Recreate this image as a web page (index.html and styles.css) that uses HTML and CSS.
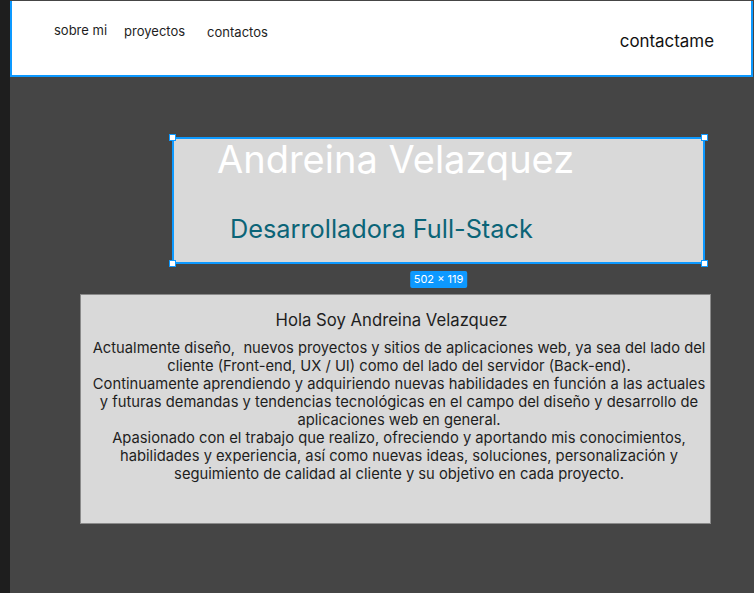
FILE: index.html
```html
<!DOCTYPE html>
<html lang="es">
<head>
<meta charset="utf-8">
<title>Andreina Velazquez</title>
<link rel="stylesheet" href="styles.css">
</head>
<body>
<div class="rail"></div>
<main class="canvas">
  <header class="topbar">
    <nav class="nav">
      <a class="nav-link nav-1">sobre mi</a>
      <a class="nav-link nav-2">proyectos</a>
      <a class="nav-link nav-3">contactos</a>
    </nav>
    <a class="cta">contactame</a>
  </header>

  <section class="hero">
    <h1 class="hero-name">Andreina Velazquez</h1>
    <h2 class="hero-role">Desarrolladora Full-Stack</h2>
    <span class="handle h-tl"></span>
    <span class="handle h-tr"></span>
    <span class="handle h-bl"></span>
    <span class="handle h-br"></span>
    <span class="size-badge">502 × 119</span>
  </section>

  <section class="about">
    <h3 class="about-title">Hola Soy Andreina Velazquez</h3>
    <p class="about-text">Actualmente diseño,&nbsp; nuevos proyectos y sitios de aplicaciones web, ya sea del lado del cliente (Front-end, UX / UI) como del lado del servidor (Back-end).<br>Continuamente aprendiendo y adquiriendo nuevas habilidades en función a las actuales y futuras demandas y tendencias tecnológicas en el campo del diseño y desarrollo de aplicaciones web en general.<br>Apasionado con el trabajo que realizo, ofreciendo y aportando mis conocimientos, habilidades y experiencia, así como nuevas ideas, soluciones, personalización y seguimiento de calidad al cliente y su objetivo en cada proyecto.</p>
  </section>
</main>
</body>
</html>
```
FILE: styles.css
```css
* { box-sizing: border-box; }

html, body {
  margin: 0;
  height: 100%;
}

body {
  display: flex;
  background: #454545;
  font-family: Inter, "Noto Sans", sans-serif;
  color: #1e1e1e;
  overflow: hidden;
}

.rail {
  width: 10px;
  flex: none;
  background: #1e1e1e;
}

.canvas {
  flex: 1;
  display: flex;
  flex-direction: column;
  align-items: flex-start;
}

.topbar {
  width: calc(100% - 1px);
  margin-top: 1px;
  height: 76px;
  background: #fff;
  border: 2px solid #0d99ff;
  border-top: 0;
  display: flex;
  align-items: flex-start;
}

.nav {
  display: flex;
  align-items: flex-start;
  padding-left: 42px;
}

.nav-link {
  font-size: 13px;
  color: #1e1e1e;
  text-decoration: none;
  line-height: 16px;
}

.nav-1 { margin-top: 21px; }
.nav-2 { margin-top: 22px; margin-left: 17px; }
.nav-3 { margin-top: 23px; margin-left: 22px; }

.cta {
  margin-left: auto;
  margin-right: 37px;
  margin-top: 30px;
  font-size: 16.9px;
  line-height: 20px;
  color: #111;
}

.hero {
  position: relative;
  margin-top: 60px;
  margin-left: 162px;
  width: 533px;
  height: 127px;
  background: #d9d9d9;
  border: 2px solid #0d99ff;
}

.hero-name {
  margin: 0;
  padding: 0 0 0 43px;
  font-size: 38px;
  line-height: 40px;
  font-weight: 400;
  color: #fff;
}

.hero-role {
  margin: 36px 0 0;
  padding-left: 56px;
  font-size: 25.3px;
  line-height: 28px;
  font-weight: 400;
  color: #0b6477;
}

.handle {
  position: absolute;
  width: 7px;
  height: 7px;
  background: #fff;
  border: 1px solid #0d99ff;
}

.h-tl { top: -5px; left: -5px; }
.h-tr { top: -5px; right: -5px; }
.h-bl { bottom: -5px; left: -5px; }
.h-br { bottom: -5px; right: -5px; }

.size-badge {
  position: absolute;
  top: calc(100% + 9px);
  left: 50%;
  transform: translateX(-50%);
  background: #0d99ff;
  color: #fff;
  font-size: 11px;
  line-height: 17px;
  padding: 0 4px;
  border-radius: 2px;
  white-space: nowrap;
}

.about {
  margin-top: 30px;
  margin-left: 70px;
  width: 631px;
  height: 230px;
  background: #d9d9d9;
  border: 1px solid #8a8a8a;
  padding: 14px 0 0 7px;
  text-align: center;
}

.about-title {
  margin: 0;
  font-size: 16.7px;
  line-height: 22px;
  font-weight: 400;
  color: #1e1e1e;
  padding-right: 15px;
}

.about-text {
  margin: 8px 0 0;
  font-size: 14.75px;
  line-height: 18px;
  color: #1e1e1e;
}
```
